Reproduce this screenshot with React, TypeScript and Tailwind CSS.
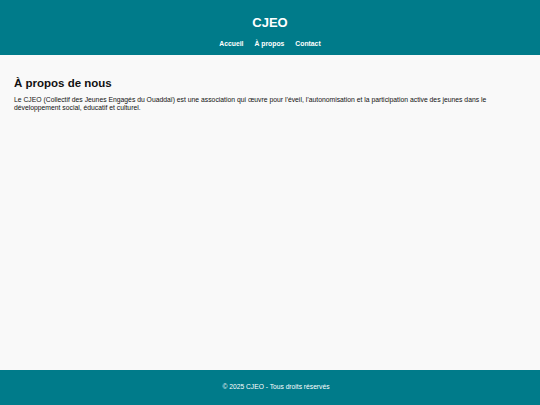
export default function App() {
  return (
    <div
      className="flex min-h-screen flex-col bg-[#f9f9f9] text-[#111]"
      style={{ fontFamily: '"Liberation Sans", Arial, sans-serif' }}
    >
      {/* Header */}
      <header className="flex h-[55px] flex-col items-center bg-[#007b8a] pt-[14px] text-white">
        <h1 className="text-[13px] font-bold leading-[18px]">CJEO</h1>
        <nav className="mt-[7px] flex gap-[11px] text-[6.8px] font-bold leading-[10px]">
          <a href="#">Accueil</a>
          <a href="#">À propos</a>
          <a href="#">Contact</a>
        </nav>
      </header>

      {/* Main */}
      <main className="flex-1 px-[14px] pt-[21px]">
        <h2 className="text-[11.5px] font-bold leading-[14px]">À propos de nous</h2>
        <p className="mt-[6px] text-[6.8px] leading-[8px]">
          Le CJEO (Collectif des Jeunes Engagés du Ouaddaï) est une association qui œuvre pour l’éveil,
          l’autonomisation et la participation active des jeunes dans le développement social, éducatif et
          culturel.
        </p>
      </main>

      {/* Footer */}
      <footer className="flex h-[35px] items-center justify-center bg-[#007b8a] pl-[12px] text-[6.7px] text-white">
        <p>© 2025 CJEO - Tous droits réservés</p>
      </footer>
    </div>
  );
}
